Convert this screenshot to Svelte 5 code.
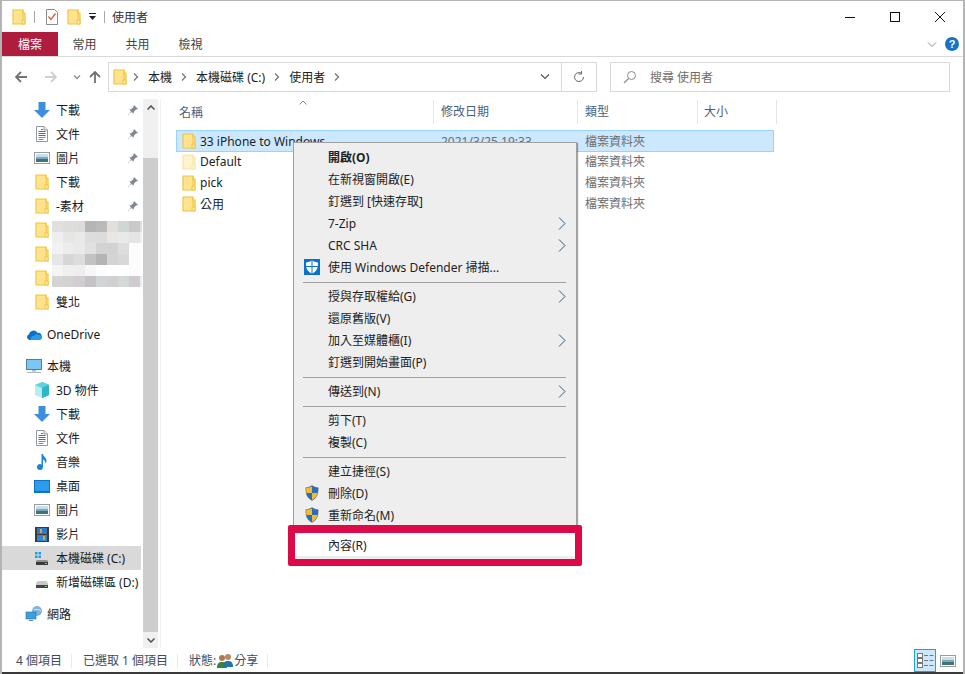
<script>
  const mosaic = [
    ['e0e0e0', 'dedddb', 'dcdcdc', 'b5b5b7', 'bbbabb', 'e2dfdc', 'd0d5d6', 'cbc9c8', 'dedede'],
    ['eeeeee', 'e6e6e6', 'e9e9e7', 'dcdedd', 'dcdcdc', 'eae7e3', 'e8eaea', 'e4e4e4', 'eeeeee'],
    ['f2f2f2', 'ececec', 'e9e9eb', 'e0e0e0', 'd2d2d2', 'd2d2d2', 'dfdcde', 'fafcfe', 'ffffff'],
    ['e6e6e6', 'd6d6d4', 'dcdcdc', 'c2c2c2', 'b4b4b4', 'd4d4d4', 'd8d8d8', 'fcfcfc', 'ffffff'],
    ['f4f4f4', 'efefef', 'eeeeee', 'f8f6f6', 'fcfefe', 'ffffff', 'ffffff', 'fcfcfc', 'ffffff'],
    ['d4d4d4', 'd2d2d0', 'd2cdd0', 'c4c2c4', 'd0d4d4', 'd0d0d0', 'd4d8d8', 'd0cbd0', 'e4f0f0']
  ];

  const files = [
    { name: '33 iPhone to Windows', date: '2021/3/25 19:33', selected: true },
    { name: 'Default', faded: true },
    { name: 'pick' },
    { name: '公用' }
  ];

  const menu = [
    { label: '開啟(O)', bold: true },
    { label: '在新視窗開啟(E)' },
    { label: '釘選到 [快速存取]' },
    { label: '7-Zip', arrow: true },
    { label: 'CRC SHA', arrow: true },
    { label: '使用 Windows Defender 掃描...', icon: 'defender' },
    { sep: true },
    { label: '授與存取權給(G)', arrow: true },
    { label: '還原舊版(V)' },
    { label: '加入至媒體櫃(I)', arrow: true },
    { label: '釘選到開始畫面(P)' },
    { sep: true },
    { label: '傳送到(N)', arrow: true },
    { sep: true },
    { label: '剪下(T)' },
    { label: '複製(C)' },
    { sep: true },
    { label: '建立捷徑(S)' },
    { label: '刪除(D)', icon: 'uac' },
    { label: '重新命名(M)', icon: 'uac' },
    { sep: true },
    { label: '內容(R)', active: true }
  ];
</script>

{#snippet folder(faded = false)}
  <svg class="ico folder" class:faded viewBox="0 0 14 16" width="14" height="16">
    <path d="M1 1h10v3h2v11H1z" fill="#ffe38f" stroke="#eec643" stroke-width="1.2" />
    <path d="M11 1v10h2v4h-3v-4h1" fill="#ffe9a8" stroke="#eec643" stroke-width="1" />
  </svg>
{/snippet}

{#snippet pin()}
  <svg class="pin" viewBox="0 0 12 12" width="12" height="12">
    <path d="M7 1l4 4-2 .6-2.200 2.200-.3 2L4 7.300 1.500 11 1 10.500 4.700 8 2.200 5.500l2-.3L6.400 3z" fill="#7f8790" />
  </svg>
{/snippet}

{#snippet arrowDown()}
  <svg viewBox="0 0 16 16" width="16" height="16" class="ico">
    <path d="M4.500 0h7v8H16l-8 8-8-8h4.500z" fill="#3e8ede" />
  </svg>
{/snippet}

{#snippet doc()}
  <svg viewBox="0 0 12 16" width="12" height="16" class="ico">
    <path d="M.5.500h7.500l3.500 3.500v11.500H.5z" fill="#fff" stroke="#8f9aa5" />
    <path d="M8 .5v3.500h3.500" fill="#e8edf2" stroke="#8f9aa5" />
    <path d="M5 3.500h2M2.500 5.500h7M2.500 7.500h7M2.500 9.500h7" stroke="#1f78c8" />
    <path d="M2.500 11.500h7M2.500 13.500h5" stroke="#6f9a8f" />
  </svg>
{/snippet}

{#snippet picture()}
  <svg viewBox="0 0 16 12" width="16" height="12" class="ico">
    <rect x=".5" y=".5" width="15" height="11" fill="#fff" stroke="#9b9b9b" />
    <rect x="2" y="2" width="12" height="3" fill="#c4dff0" />
    <rect x="2" y="5" width="12" height="2" fill="#7fa8b4" />
    <rect x="2" y="7" width="12" height="3" fill="#3f7474" />
  </svg>
{/snippet}

{#snippet navChevron()}
  <svg viewBox="0 0 6 8" width="6" height="8" class="crumb-sep">
    <path d="M1 .5L4.500 4 1 7.500" fill="none" stroke="#777" stroke-width="1.300" />
  </svg>
{/snippet}

{#snippet uac()}
  <svg class="uac" viewBox="0 0 16 18" width="14" height="16">
    <path d="M8 .5C6 2 3.500 2.800 1 3c0 6 .5 11 7 14.500C14.500 14 15 9 15 3 12.500 2.800 10 2 8 .5z" fill="#2a6fb8" stroke="#56606a" stroke-width=".6" />
    <path d="M8 1.500V9H1.600C1.400 7.500 1.300 5.500 1.300 3.300 3.800 3 6 2.500 8 1.500zM8 9h6.300c-.6 3.200-2.300 5.900-6.300 8z" fill="#f6b92f" />
  </svg>
{/snippet}

{#snippet defender()}
  <svg viewBox="0 0 16 16" width="16" height="16">
    <rect width="16" height="16" fill="#0a72cc" />
    <path d="M8 1.500c-1.700 1.100-3.700 1.700-6 1.900 0 5.600.9 8.900 6 11.100 5.100-2.200 6-5.500 6-11.100-2.300-.2-4.300-.8-6-1.900z" fill="#fff" />
    <path d="M7.500 1.800h1v12.400h-1zM2.100 7h11.800v1H2.100z" fill="#0a72cc" />
  </svg>
{/snippet}

<div class="window">
  <header class="titlebar">
    {@render folder()}
    <span class="tb-sep"></span>
    <svg class="check" viewBox="0 0 12 16" width="12" height="16">
      <path d="M.5.500h8l3 3v12H.5z" fill="#fff" stroke="#8c8c8c" />
      <path d="M2.500 7.500l2.500 3 4.500-6" fill="none" stroke="#e2582c" stroke-width="1.300" />
    </svg>
    {@render folder()}
    <svg class="qa-drop" viewBox="0 0 7 7" width="7" height="7">
      <path d="M0 0h7v1H0zM0 3h7L3.500 7z" fill="#222" />
    </svg>
    <span class="tb-sep"></span>
    <span class="title">使用者</span>
    <div class="controls">
      <svg viewBox="0 0 10 10" width="10" height="10"><path d="M0 5.500h10" stroke="#111" /></svg>
      <svg viewBox="0 0 10 10" width="10" height="10"><rect x=".5" y=".5" width="9" height="9" fill="none" stroke="#111" /></svg>
      <svg viewBox="0 0 10 10" width="10" height="10"><path d="M0 0l10 10M10 0L0 10" stroke="#111" /></svg>
    </div>
  </header>

  <nav class="ribbon">
    <span class="tab file">檔案</span>
    <span class="tab">常用</span>
    <span class="tab">共用</span>
    <span class="tab">檢視</span>
    <svg class="rb-chev" viewBox="0 0 10 6" width="10" height="6">
      <path d="M1 .5l4 4 4-4" fill="none" stroke="#8c8c8c" />
    </svg>
    <span class="help">?</span>
  </nav>

  <div class="addressbar">
    <svg class="nav back" viewBox="0 0 12 12" width="12" height="12">
      <path d="M6 1L1 6l5 5M1 6h11" fill="none" stroke="#727272" stroke-width="1.800" />
    </svg>
    <svg class="nav fwd" viewBox="0 0 12 12" width="12" height="12">
      <path d="M6 1l5 5-5 5M11 6H0" fill="none" stroke="#cfcfcf" stroke-width="1.800" />
    </svg>
    <svg class="nav hist" viewBox="0 0 8 5" width="8" height="5">
      <path d="M1 .5l3 3 3-3" fill="none" stroke="#8c8c8c" stroke-width="1.300" />
    </svg>
    <svg class="nav up" viewBox="0 0 12 12" width="12" height="12">
      <path d="M1 6l5-5 5 5M6 1v11" fill="none" stroke="#727272" stroke-width="1.800" />
    </svg>
    <div class="pathbox">
      {@render folder()}
      {@render navChevron()}
      <span>本機</span>
      {@render navChevron()}
      <span>本機磁碟 (C:)</span>
      {@render navChevron()}
      <span>使用者</span>
      {@render navChevron()}
      <svg class="path-drop" viewBox="0 0 10 6" width="10" height="6">
        <path d="M1 .5l4 4 4-4" fill="none" stroke="#555" stroke-width="1.200" />
      </svg>
      <span class="path-sep"></span>
      <svg class="refresh" viewBox="0 0 12 12" width="12" height="12">
        <path d="M10.500 6A4.500 4.500 0 1 1 8.500 2.300M8.500 0v3h-3" fill="none" stroke="#666" />
      </svg>
    </div>
    <div class="searchbox">
      <svg viewBox="0 0 14 14" width="14" height="14">
        <circle cx="8.500" cy="5.500" r="4" fill="none" stroke="#8c8c8c" />
        <path d="M5.500 8.500L1 13" stroke="#8c8c8c" stroke-width="1.300" />
      </svg>
      <span>搜尋 使用者</span>
    </div>
  </div>

  <div class="body">
    <aside class="sidebar">
      <div class="tree">
        <div class="row l2">{@render arrowDown()}<span>下載</span>{@render pin()}</div>
        <div class="row l2">{@render doc()}<span>文件</span>{@render pin()}</div>
        <div class="row l2">{@render picture()}<span>圖片</span>{@render pin()}</div>
        <div class="row l2">{@render folder()}<span>下載</span>{@render pin()}</div>
        <div class="row l2">{@render folder()}<span>-素材</span>{@render pin()}</div>
        <div class="row l2">{@render folder()}</div>
        <div class="row l2">{@render folder()}</div>
        <div class="row l2">{@render folder()}</div>
        <div class="row l2">{@render folder()}<span>雙北</span></div>

        <div class="row l1 gap">
          <svg viewBox="0 0 16 11" width="16" height="11" class="ico">
            <path d="M13 11H3.500A3 3 0 0 1 3 5.200 4.500 4.500 0 0 1 11.300 3.800 3.700 3.700 0 0 1 13 11z" fill="#0f6fc4" />
            <path d="M5 11c-1-2 .5-4 3-4 .5-1.500 3-2.500 4.500-1.300C14.500 5.500 16 7 16 8.500 16 10 15 11 13 11z" fill="#2a9be8" />
          </svg>
          <span>OneDrive</span>
        </div>

        <div class="row l1 gap">
          <svg viewBox="0 0 16 14" width="16" height="14" class="ico">
            <rect x=".5" y=".5" width="15" height="10" fill="#7cc6f5" stroke="#4d7fa8" />
            <path d="M6 11h4v1.500H6zM1 13h14v1H1z" fill="#a8b6c2" />
          </svg>
          <span>本機</span>
        </div>
        <div class="row l2">
          <svg viewBox="0 0 16 16" width="16" height="16" class="ico">
            <path d="M8 0l7 3v10l-7 3z" fill="#1b9bb0" />
            <path d="M8 0L1 3v10l7 3z" fill="#b6ecf2" />
            <path d="M1 3l7 3 7-3-7-3z" fill="#5fd3e0" />
            <path d="M8 6v10l7-3V3z" fill="#2fb6c8" />
          </svg>
          <span>3D 物件</span>
        </div>
        <div class="row l2">{@render arrowDown()}<span>下載</span></div>
        <div class="row l2">{@render doc()}<span>文件</span></div>
        <div class="row l2">
          <svg viewBox="0 0 12 16" width="12" height="16" class="ico">
            <path d="M5.500 0H7c.3 3 3.500 3.500 3.500 7 0 1-.3 2-1 2.700.2-2.700-1.300-3.700-2.500-4.200V13a3 3 0 1 1-1.500-2.500z" fill="#1a86d8" />
          </svg>
          <span>音樂</span>
        </div>
        <div class="row l2">
          <svg viewBox="0 0 16 13" width="16" height="13" class="ico">
            <rect width="16" height="13" fill="#0c73c9" />
            <rect x="1" y="1" width="14" height="10" fill="#2e9cec" />
          </svg>
          <span>桌面</span>
        </div>
        <div class="row l2">{@render picture()}<span>圖片</span></div>
        <div class="row l2">
          <svg viewBox="0 0 14 15" width="14" height="15" class="ico">
            <rect width="14" height="15" fill="#3a3a3a" />
            <path d="M2 1h10v6H2z" fill="#2f79c6" />
            <path d="M2 8h10v6H2z" fill="#3187d6" />
            <path d="M5 2h2v4H5zM8 9h2v4H8z" fill="#e0a23a" />
          </svg>
          <span>影片</span>
        </div>
        <div class="row l2 current">
          <svg viewBox="0 0 16 16" width="16" height="16" class="ico">
            <path d="M1 2h2.500v2.500H1zM4.500 2H7v2.500H4.500zM1 5.500h2.500V8H1zM4.500 5.500H7V8H4.500z" fill="#1f9de8" />
            <path d="M2 11l1-1h10l1 1v4H2z" fill="#8f8f8f" />
            <rect x="2" y="12" width="12" height="3" fill="#3a3a3a" />
            <rect x="11" y="13" width="2" height="1" fill="#6fd35a" />
          </svg>
          <span>本機磁碟 (C:)</span>
        </div>
        <div class="row l2">
          <svg viewBox="0 0 16 16" width="16" height="16" class="ico">
            <path d="M2 9l2-2h8l2 2v2H2z" fill="#c9c9c9" />
            <rect x="2" y="11" width="12" height="3" fill="#444" />
            <rect x="11" y="12" width="2" height="1" fill="#6fd35a" />
          </svg>
          <span>新增磁碟區 (D:)</span>
        </div>

        <div class="row l1 gap">
          <svg viewBox="0 0 16 16" width="16" height="16" class="ico">
            <circle cx="11" cy="5" r="5" fill="#7fb2dc" />
            <path d="M8 4c2-1 5-1 7 1" stroke="#d9ecf8" fill="none" />
            <rect x="0" y="6" width="10" height="7" fill="#3aa0e0" stroke="#2d6e9e" stroke-width=".6" />
            <path d="M3 14h4v1H3z" fill="#5f87a6" />
          </svg>
          <span>網路</span>
        </div>
      </div>

      <div class="blur" aria-hidden="true">
        {#each mosaic as line}
          {#each line as cell}
            <i style="background:#{cell}"></i>
          {/each}
        {/each}
      </div>

      <div class="scrollbar">
        <div class="sb-btn">
          <svg viewBox="0 0 8 5" width="8" height="5"><path d="M.5 4.500L4 1l3.500 3.500" fill="none" stroke="#505050" stroke-width="1.500" /></svg>
        </div>
        <div class="sb-track"></div>
        <div class="sb-thumb"></div>
        <div class="sb-btn">
          <svg viewBox="0 0 8 5" width="8" height="5"><path d="M.5.500L4 4 7.500.5" fill="none" stroke="#505050" stroke-width="1.500" /></svg>
        </div>
      </div>
    </aside>

    <main class="list">
      <svg class="sort" viewBox="0 0 8 5" width="8" height="5"><path d="M.5 4.500L4 1l3.500 3.500" fill="none" stroke="#8c8c8c" /></svg>
      <div class="head">
        <span class="c-name">名稱</span>
        <span class="c-date">修改日期</span>
        <span class="c-type">類型</span>
        <span class="c-size">大小</span>
      </div>
      <div class="files">
        {#each files as f}
          <div class="file-row" class:selected={f.selected}>
            <span class="c-name">{@render folder(f.faded)}<em>{f.name}</em></span>
            <span class="c-date">{f.date ?? ''}</span>
            <span class="c-type">檔案資料夾</span>
          </div>
        {/each}
      </div>
    </main>
  </div>

  <footer class="status">
    <span class="st st1">4 個項目</span>
    <span class="st st2">已選取 1 個項目</span>
    <span class="st st3">狀態:
      <svg viewBox="0 0 16 16" width="16" height="16">
        <circle cx="5" cy="5" r="3" fill="#a87a55" />
        <path d="M0 15c0-5 2-6 5-6s5 1 5 6z" fill="#3f7f3a" />
        <circle cx="11" cy="4" r="3" fill="#b98a60" />
        <path d="M6 14c0-5 2-6 5-6s5 1 5 6z" fill="#1f76a8" />
      </svg>
      分享</span>
    <div class="views">
      <span class="view on">
        <svg viewBox="0 0 17 15" width="17" height="15">
          <rect x=".5" y=".5" width="5" height="4" fill="#fff" stroke="#777" />
          <rect x=".5" y="5.500" width="5" height="4" fill="#fff" stroke="#777" />
          <rect x=".5" y="10.500" width="5" height="4" fill="#fff" stroke="#777" />
          <path d="M7 2.500h4M12.500 2.500H16.500M7 7.500h4M12.500 7.500H16.500M7 12.500h4M12.500 12.500H16.500" stroke="#777" />
        </svg>
      </span>
      <span class="view">{@render picture()}</span>
    </div>
  </footer>

  <div class="menu">
    {#each menu as m}
      {#if m.sep}
        <div class="menu-sep"></div>
      {:else}
        <div class="menu-item" class:bold={m.bold} class:active={m.active}>
          <span class="menu-icon">
            {#if m.icon === 'defender'}{@render defender()}{:else if m.icon === 'uac'}{@render uac()}{/if}
          </span>
          <span class="menu-label">{m.label}</span>
          {#if m.arrow}
            <svg viewBox="0 0 8 13" width="8" height="13" class="menu-arrow">
              <path d="M1 .5l6 6-6 6" fill="none" stroke="#33597f" />
            </svg>
          {/if}
        </div>
      {/if}
    {/each}
  </div>
  <div class="callout"></div>
</div>

<style>
  :global(body) {
    margin: 0;
    overflow: hidden;
  }

  .window {
    position: relative;
    box-sizing: border-box;
    width: 965px;
    height: 674px;
    display: flex;
    flex-direction: column;
    background: #fff;
    border: solid #b4b4b4;
    border-width: 1px 2px 0 2px;
    font: 12px "Noto Sans", "Noto Sans CJK TC", sans-serif;
    color: #1a1a1a;
    overflow: hidden;
  }

  .ico {
    flex: none;
  }

  .folder.faded {
    opacity: 0.45;
  }

  .titlebar {
    height: 31px;
    display: flex;
    align-items: center;
    padding-left: 10px;
    flex: none;
  }

  .tb-sep {
    width: 1px;
    height: 12px;
    background: #a8a8a8;
    margin: 0 8px 0 8px;
  }

  .check {
    margin: 0 9px 0 3px;
  }

  .qa-drop {
    margin-left: 8px;
  }

  .title {
    color: #333;
    margin-left: -1px;
  }

  .controls {
    margin-left: auto;
    display: flex;
    gap: 35px;
    padding-right: 18px;
  }

  .ribbon {
    height: 24px;
    flex: none;
    display: flex;
    align-items: stretch;
    border-bottom: 1px solid #d9d9d9;
    padding-right: 4px;
  }

  .tab {
    display: flex;
    align-items: center;
    justify-content: center;
    color: #444;
    width: 53px;
  }

  .tab.file {
    width: 56px;
    background: #ae1c3e;
    color: #fff;
  }

  .rb-chev {
    margin: 10px 8px 0 auto;
  }

  .help {
    width: 14px;
    height: 14px;
    margin-top: 5px;
    border-radius: 50%;
    background: #1673c5;
    color: #fff;
    font: bold 11px/14px "Liberation Sans", sans-serif;
    text-align: center;
  }

  .addressbar {
    height: 42px;
    flex: none;
    display: flex;
    align-items: center;
    padding-bottom: 2px;
    box-sizing: border-box;
  }

  .nav.back {
    margin-left: 13px;
  }

  .nav.fwd {
    margin-left: 18px;
  }

  .nav.hist {
    margin-left: 16px;
  }

  .nav.up {
    margin-left: 8px;
  }

  .pathbox {
    margin-left: 7px;
    width: 489px;
    height: 30px;
    box-sizing: border-box;
    border: 1px solid #d9d9d9;
    display: flex;
    align-items: center;
    padding-left: 4px;
    color: #222;
  }

  .pathbox .folder {
    margin-right: -3px;
  }

  .crumb-sep {
    margin: 0 9px;
  }

  .path-drop {
    margin-left: auto;
  }

  .path-sep {
    width: 1px;
    height: 28px;
    background: #d9d9d9;
    margin: 0 11px 0 11px;
  }

  .refresh {
    margin-right: 11px;
  }

  .searchbox {
    margin-left: 13px;
    width: 340px;
    height: 30px;
    box-sizing: border-box;
    border: 1px solid #d9d9d9;
    display: flex;
    align-items: center;
    gap: 13px;
    padding-left: 12px;
    color: #6d6d6d;
  }

  .body {
    flex: 1;
    display: flex;
    min-height: 0;
    position: relative;
  }

  .sidebar {
    width: 159px;
    flex: none;
    display: flex;
    justify-content: space-between;
    border-right: 1px solid #f0f0f0;
    box-sizing: border-box;
    position: relative;
  }

  .tree {
    width: 139px;
    margin-top: -1px;
  }

  .row {
    height: 24px;
    display: flex;
    align-items: center;
    position: relative;
    white-space: nowrap;
  }

  .row.l1 {
    padding-left: 23px;
    gap: 4px;
  }

  .row.l2 {
    padding-left: 31px;
    gap: 5px;
  }

  .row.gap {
    margin-top: 8px;
  }

  .row .ico {
    width: 18px;
    flex: none;
  }

  .row.current {
    background: #d9d9d9;
  }

  .pin {
    position: absolute;
    left: 125px;
    top: 6px;
  }

  .blur {
    position: absolute;
    left: 50px;
    top: 122px;
    display: grid;
    grid-template-columns: repeat(8, 11px) 2px;
    grid-auto-rows: 11px;
    width: 90px;
    overflow: hidden;
  }

  .scrollbar {
    width: 15px;
    display: flex;
    flex-direction: column;
    background: #f0f0f0;
    flex: none;
    margin-right: 2px;
  }

  .sb-btn {
    height: 16px;
    display: flex;
    align-items: center;
    justify-content: center;
    flex: none;
  }

  .sb-track {
    height: 43px;
    flex: none;
  }

  .sb-thumb {
    flex: 1;
    background: #cdcdcd;
  }

  .list {
    flex: 1;
    position: relative;
    padding-left: 15px;
    padding-top: 1px;
  }

  .sort {
    position: absolute;
    left: 138px;
    top: 1px;
  }

  .head {
    height: 24px;
    display: flex;
    align-items: center;
    color: #4c607a;
  }

  .c-name {
    width: 257px;
    display: flex;
    align-items: center;
    gap: 4px;
    padding-left: 5px;
    box-sizing: border-box;
    white-space: nowrap;
    flex: none;
  }

  .head .c-name {
    padding-left: 3px;
  }

  .c-date {
    width: 144px;
    box-sizing: border-box;
    padding-left: 7px;
    border-left: 1px solid #e5e5e5;
    line-height: 24px;
    flex: none;
  }

  .c-type {
    width: 120px;
    box-sizing: border-box;
    padding-left: 7px;
    border-left: 1px solid #e5e5e5;
    line-height: 24px;
    flex: none;
  }

  .c-size {
    width: 80px;
    box-sizing: border-box;
    padding-left: 6px;
    border-left: 1px solid #e5e5e5;
    border-right: 1px solid #e5e5e5;
    line-height: 24px;
    flex: none;
  }

  .files {
    margin-top: 6px;
    width: 598px;
  }

  .file-row {
    display: flex;
    align-items: center;
    height: 21px;
    box-sizing: border-box;
    color: #222;
    border: 1px solid transparent;
  }

  .file-row em {
    font-style: normal;
  }

  .file-row .c-date {
    padding-left: 6px;
  }

  .file-row .c-type {
    padding-left: 6px;
  }

  .file-row .c-date,
  .file-row .c-type {
    border-left-color: transparent;
    color: #6d6d6d;
    line-height: 19px;
  }

  .file-row.selected {
    background: #cce8ff;
    border-color: #99d1ff;
    height: 22px;
    margin-bottom: -1px;
  }

  .status {
    height: 26px;
    flex: none;
    display: flex;
    align-items: center;
    padding-top: 1px;
    box-sizing: border-box;
    color: #3c4c60;
    border-bottom: 2px solid #3a3a3a;
  }

  .st {
    height: 14px;
    line-height: 14px;
    display: flex;
    align-items: center;
    gap: 1px;
    box-sizing: border-box;
    border-right: 1px solid #eaeaea;
    white-space: nowrap;
  }

  .st1 {
    width: 70px;
    padding-left: 14px;
  }

  .st2 {
    width: 106px;
    padding-left: 11px;
  }

  .st3 {
    width: 90px;
    padding-left: 11px;
  }

  .views {
    margin-left: auto;
    display: flex;
    align-items: center;
    gap: 4px;
    padding-right: 7px;
  }

  .view {
    display: flex;
    align-items: center;
    justify-content: center;
  }

  .view.on {
    width: 22px;
    height: 23px;
    box-sizing: border-box;
    background: #cce8ff;
    border: 1px solid #26a0da;
  }

  .menu {
    position: absolute;
    left: 291px;
    top: 141px;
    width: 284px;
    box-sizing: border-box;
    padding: 3px 0 3px;
    background: #eeeeee;
    border: 1px solid #a0a0a0;
    box-shadow: 1px 1px 1px rgba(0, 0, 0, 0.35);
    color: #222;
  }

  .menu-item {
    height: 22px;
    display: flex;
    align-items: center;
    white-space: nowrap;
  }

  .menu-item.bold {
    font-weight: 700;
  }

  .menu-item.active {
    background: #fff;
    height: 23px;
  }

  .menu-icon {
    width: 34px;
    padding-left: 10px;
    box-sizing: border-box;
    display: flex;
    flex: none;
  }

  .uac {
    margin-left: 1px;
  }

  .menu-arrow {
    margin-left: auto;
    margin-right: 10px;
  }

  .menu-sep {
    height: 1px;
    margin: 4px 10px 2px 9px;
    background: #a0a0a0;
  }

  .callout {
    position: absolute;
    left: 286px;
    top: 524px;
    width: 294px;
    height: 41px;
    box-sizing: border-box;
    border: solid #dc0a48;
    border-width: 8px 7px 7px 7px;
    border-radius: 2px;
  }
</style>
